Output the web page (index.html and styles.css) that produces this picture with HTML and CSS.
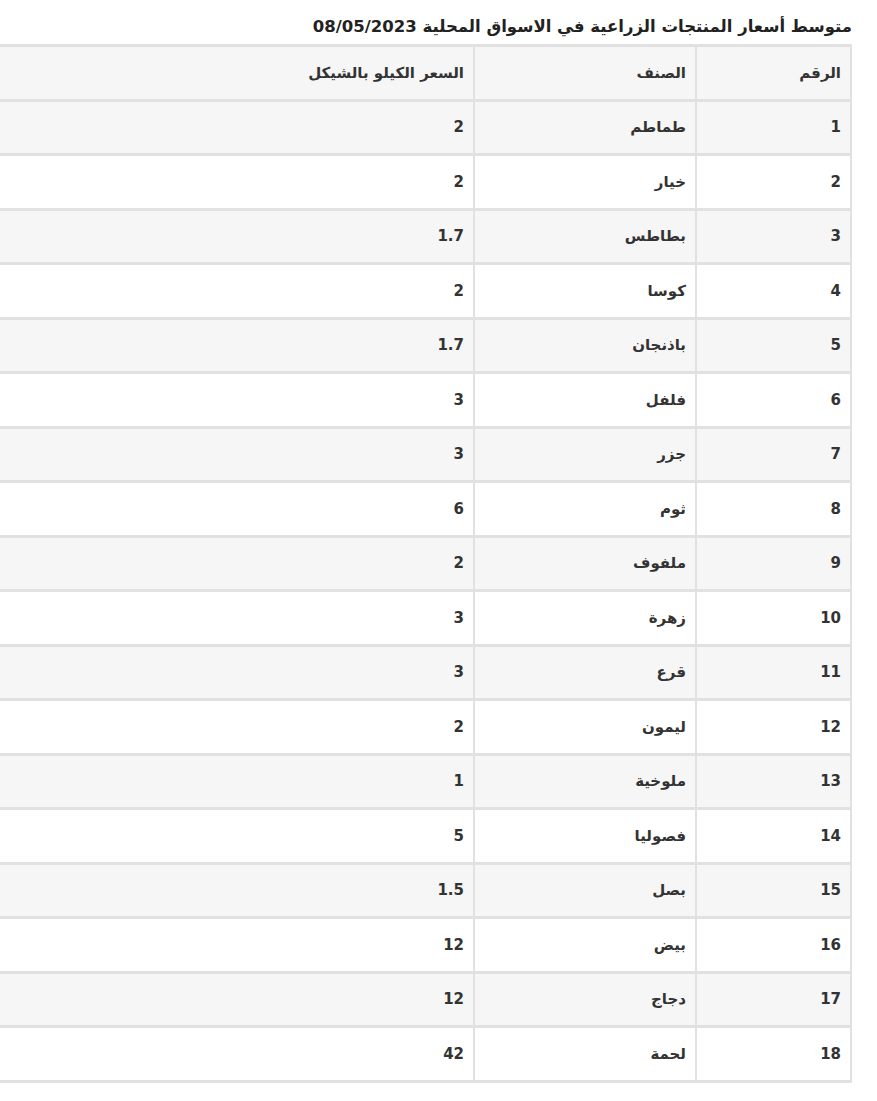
FILE: index.html
```html
<!DOCTYPE html>
<html lang="ar" dir="rtl">
<head>
<meta charset="utf-8">
<link rel="stylesheet" href="styles.css">
</head>
<body>
<div class="page">
  <h1 class="title">متوسط أسعار المنتجات الزراعية في الاسواق المحلية 08/05/2023</h1>
  <table class="prices">
    <colgroup>
      <col class="c-num">
      <col class="c-item">
      <col class="c-price">
    </colgroup>
    <thead>
      <tr><th>الرقم</th><th>الصنف</th><th>السعر الكيلو بالشيكل</th></tr>
    </thead>
    <tbody>
      <tr><td>1</td><td>طماطم</td><td>2</td></tr>
      <tr><td>2</td><td>خيار</td><td>2</td></tr>
      <tr><td>3</td><td>بطاطس</td><td>1.7</td></tr>
      <tr><td>4</td><td>كوسا</td><td>2</td></tr>
      <tr><td>5</td><td>باذنجان</td><td>1.7</td></tr>
      <tr><td>6</td><td>فلفل</td><td>3</td></tr>
      <tr><td>7</td><td>جزر</td><td>3</td></tr>
      <tr><td>8</td><td>ثوم</td><td>6</td></tr>
      <tr><td>9</td><td>ملفوف</td><td>2</td></tr>
      <tr><td>10</td><td>زهرة</td><td>3</td></tr>
      <tr><td>11</td><td>قرع</td><td>3</td></tr>
      <tr><td>12</td><td>ليمون</td><td>2</td></tr>
      <tr><td>13</td><td>ملوخية</td><td>1</td></tr>
      <tr><td>14</td><td>فصوليا</td><td>5</td></tr>
      <tr><td>15</td><td>بصل</td><td>1.5</td></tr>
      <tr><td>16</td><td>بيض</td><td>12</td></tr>
      <tr><td>17</td><td>دجاج</td><td>12</td></tr>
      <tr><td>18</td><td>لحمة</td><td>42</td></tr>
    </tbody>
  </table>
</div>
</body>
</html>
```

FILE: styles.css
```css
html, body {
  margin: 0;
  padding: 0;
  background: #ffffff;
}
body {
  font-family: "DejaVu Sans", "Noto Sans", sans-serif;
  color: #333333;
  overflow: hidden;
}
.page {
  direction: rtl;
  padding: 17px 25px 0 0;
  width: 852px;
  overflow: hidden;
}
.title {
  margin: 0 0 7px 0;
  font-size: 16.5px;
  font-weight: bold;
  line-height: 20px;
  color: #222222;
  text-align: right;
}
.prices {
  border-collapse: collapse;
  width: 1000px;
  table-layout: fixed;
  font-size: 15px;
  font-weight: bold;
}
.c-num { width: 155px; }
.c-item { width: 222px; }
.c-price { width: 623px; }
.prices th,
.prices td {
  border: 2px solid #e1e1e1;
  border-top-width: 3px;
  border-bottom-width: 3px;
  height: 51.5px;
  padding: 0 9px;
  text-align: right;
  vertical-align: middle;
  color: #333333;
}
.prices thead tr {
  background: #f6f6f6;
}
.prices tbody tr:nth-child(odd) {
  background: #f6f6f6;
}
.prices tbody tr:nth-child(even) {
  background: #ffffff;
}
```
